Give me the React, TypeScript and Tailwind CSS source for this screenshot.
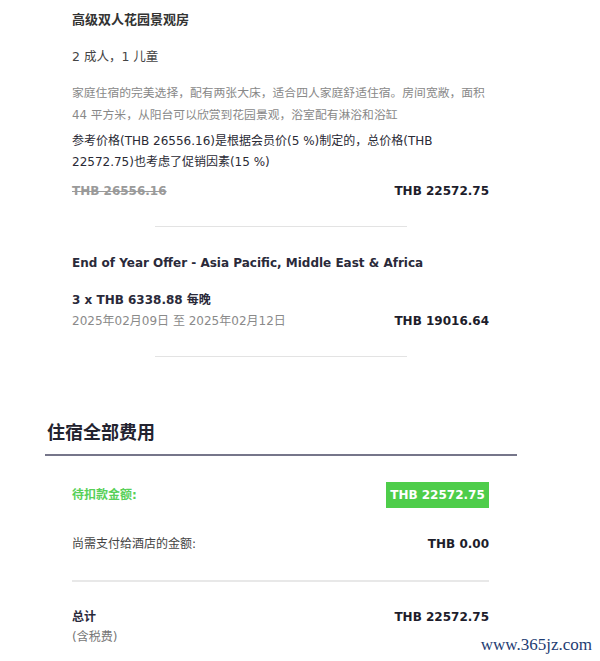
import React from "react";

const FONT = { fontFamily: '"DejaVu Sans", "Noto Sans CJK SC", sans-serif' };

const PriceRow: React.FC<{ left: React.ReactNode; right: string; className?: string }> = ({
  left,
  right,
  className = "",
}) => (
  <div className={`flex items-center justify-between leading-[20px] ${className}`}>
    <div>{left}</div>
    <div className="font-bold text-[12px] text-[#1d1d2b]">{right}</div>
  </div>
);

const App: React.FC = () => {
  return (
    <div className="relative w-[600px] h-[661px] bg-white overflow-hidden" style={FONT}>
      {/* room section */}
      <div className="ml-[72px] w-[417px] pt-[10px]">
        <div className="text-[13px] font-bold leading-[20px] text-[#333]">高级双人花园景观房</div>
        <div className="mt-[17px] text-[12.5px] leading-[20px] text-[#444]">2 成人，1 儿童</div>
        <p className="mt-[15px] text-[11.8px] leading-[22px] text-[#888]">
          家庭住宿的完美选择，配有两张大床，适合四人家庭舒适住宿。房间宽敞，面积 44 平方米，从阳台可以欣赏到花园景观，浴室配有淋浴和浴缸
        </p>
        <p className="mt-[5px] text-[12px] leading-[21px] text-[#2a2a35]">
          参考价格(THB 26556.16)是根据会员价(5 %)制定的，总价格(THB 22572.75)也考虑了促销因素(15 %)
        </p>
        <PriceRow
          className="mt-[7px]"
          left={<span className="text-[12px] font-bold text-[#9a9a9a] line-through">THB 26556.16</span>}
          right="THB 22572.75"
        />
        <div className="mx-auto mt-[25px] h-px w-[252px] bg-[#e3e3e3]" />

        <div className="mt-[26px] text-[12px] font-bold leading-[20px] text-[#2a2a3a]">
          End of Year Offer - Asia Pacific, Middle East &amp; Africa
        </div>
        <div className="mt-[17px] text-[12px] font-bold leading-[20px] text-[#2a2a3a]">3 x THB 6338.88 每晚</div>
        <PriceRow
          left={<span className="text-[12px] text-[#8a8a8a]">2025年02月09日 至 2025年02月12日</span>}
          right="THB 19016.64"
        />
        <div className="mx-auto mt-[25px] h-px w-[252px] bg-[#e3e3e3]" />
      </div>

      {/* totals */}
      <div className="ml-[45px] mt-[63px]">
        <h2 className="text-[18px] font-bold leading-[26px] text-[#23232f] ml-[2px]">住宿全部费用</h2>
        <div className="mt-[8px] h-[2px] w-[472px] bg-[#76768a]" />

        <div className="ml-[27px] w-[417px]">
          <div className="mt-[26px] flex items-center justify-between">
            <span className="text-[12px] font-semibold text-[#58d058]">待扣款金额:</span>
            <span className="flex h-[26px] w-[103px] items-center justify-center bg-[#4ecd4a] text-[12px] font-bold text-white">
              THB 22572.75
            </span>
          </div>

          <PriceRow
            className="mt-[25px]"
            left={<span className="text-[12px] text-[#444]">尚需支付给酒店的金额:</span>}
            right="THB 0.00"
          />
          <div className="mt-[26px] h-[2px] w-full bg-[#e8e8e8]" />

          <PriceRow
            className="mt-[24px]"
            left={<span className="text-[12px] font-bold text-[#2a2a3a]">总计</span>}
            right="THB 22572.75"
          />
          <div className="text-[12px] leading-[20px] text-[#777]">(含税费)</div>
        </div>
      </div>

      {/* watermark */}
      <div className="absolute right-[8px] bottom-[6px] text-[17px] leading-[20px] text-[#1e3c72]" style={{ fontFamily: '"Liberation Serif", serif' }}>
        www.365jz.com
      </div>
    </div>
  );
};

export default App;
